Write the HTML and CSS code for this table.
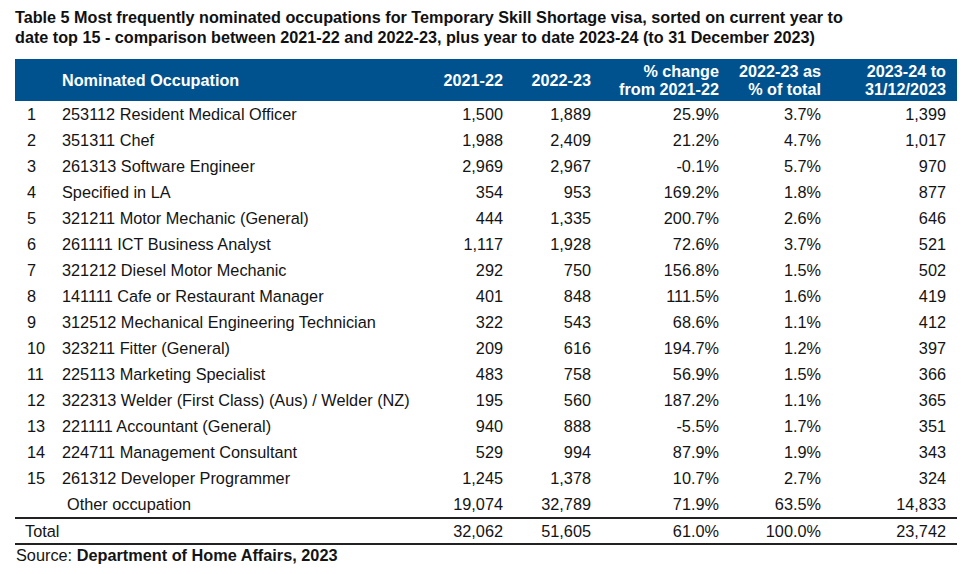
FILE: index.html
```html
<!DOCTYPE html>
<html lang="en">
<head>
<meta charset="utf-8">
<title>Table 5</title>
<link rel="stylesheet" href="styles.css">
</head>
<body>
<div class="page">
  <h1 class="title">Table 5 Most frequently nominated occupations for Temporary Skill Shortage visa, sorted on current year to<br>date top 15 - comparison between 2021-22 and 2022-23, plus year to date 2023-24 (to 31 December 2023)</h1>
  <table class="data">
    <colgroup>
      <col class="c-num"><col class="c-occ"><col class="c-y1"><col class="c-y2"><col class="c-chg"><col class="c-pct"><col class="c-ytd">
    </colgroup>
    <thead>
      <tr>
        <th></th>
        <th class="left">Nominated Occupation</th>
        <th>2021-22</th>
        <th>2022-23</th>
        <th>% change<br>from 2021-22</th>
        <th>2022-23 as<br>% of total</th>
        <th>2023-24 to<br>31/12/2023</th>
      </tr>
    </thead>
    <tbody>
      <tr><td class="rank">1</td><td class="occ">253112 Resident Medical Officer</td><td>1,500</td><td>1,889</td><td>25.9%</td><td>3.7%</td><td>1,399</td></tr>
      <tr><td class="rank">2</td><td class="occ">351311 Chef</td><td>1,988</td><td>2,409</td><td>21.2%</td><td>4.7%</td><td>1,017</td></tr>
      <tr><td class="rank">3</td><td class="occ">261313 Software Engineer</td><td>2,969</td><td>2,967</td><td>-0.1%</td><td>5.7%</td><td>970</td></tr>
      <tr><td class="rank">4</td><td class="occ">Specified in LA</td><td>354</td><td>953</td><td>169.2%</td><td>1.8%</td><td>877</td></tr>
      <tr><td class="rank">5</td><td class="occ">321211 Motor Mechanic (General)</td><td>444</td><td>1,335</td><td>200.7%</td><td>2.6%</td><td>646</td></tr>
      <tr><td class="rank">6</td><td class="occ">261111 ICT Business Analyst</td><td>1,117</td><td>1,928</td><td>72.6%</td><td>3.7%</td><td>521</td></tr>
      <tr><td class="rank">7</td><td class="occ">321212 Diesel Motor Mechanic</td><td>292</td><td>750</td><td>156.8%</td><td>1.5%</td><td>502</td></tr>
      <tr><td class="rank">8</td><td class="occ">141111 Cafe or Restaurant Manager</td><td>401</td><td>848</td><td>111.5%</td><td>1.6%</td><td>419</td></tr>
      <tr><td class="rank">9</td><td class="occ">312512 Mechanical Engineering Technician</td><td>322</td><td>543</td><td>68.6%</td><td>1.1%</td><td>412</td></tr>
      <tr><td class="rank">10</td><td class="occ">323211 Fitter (General)</td><td>209</td><td>616</td><td>194.7%</td><td>1.2%</td><td>397</td></tr>
      <tr><td class="rank">11</td><td class="occ">225113 Marketing Specialist</td><td>483</td><td>758</td><td>56.9%</td><td>1.5%</td><td>366</td></tr>
      <tr><td class="rank">12</td><td class="occ">322313 Welder (First Class) (Aus) / Welder (NZ)</td><td>195</td><td>560</td><td>187.2%</td><td>1.1%</td><td>365</td></tr>
      <tr><td class="rank">13</td><td class="occ">221111 Accountant (General)</td><td>940</td><td>888</td><td>-5.5%</td><td>1.7%</td><td>351</td></tr>
      <tr><td class="rank">14</td><td class="occ">224711 Management Consultant</td><td>529</td><td>994</td><td>87.9%</td><td>1.9%</td><td>343</td></tr>
      <tr><td class="rank">15</td><td class="occ">261312 Developer Programmer</td><td>1,245</td><td>1,378</td><td>10.7%</td><td>2.7%</td><td>324</td></tr>
      <tr><td class="rank"></td><td class="occ other">Other occupation</td><td>19,074</td><td>32,789</td><td>71.9%</td><td>63.5%</td><td>14,833</td></tr>
    </tbody>
    <tfoot>
      <tr><td class="total-label" colspan="2">Total</td><td>32,062</td><td>51,605</td><td>61.0%</td><td>100.0%</td><td>23,742</td></tr>
    </tfoot>
  </table>
  <p class="source">Source: <strong>Department of Home Affairs, 2023</strong></p>
</div>
</body>
</html>
```

FILE: styles.css
```css
html, body {
  margin: 0;
  padding: 0;
  background: #ffffff;
}

body {
  font-family: "Liberation Sans", Arial, sans-serif;
  color: #141414;
}

.page {
  padding: 7px 8px 0 15px;
}

.title {
  margin: 0;
  font-size: 16.2px;
  line-height: 20px;
  font-weight: bold;
  color: #111111;
}

.data {
  margin-top: 12px;
  width: 942px;
  border-collapse: collapse;
  table-layout: fixed;
  font-size: 16.3px;
}

.c-num { width: 47px; }
.c-occ { width: 368px; }
.c-y1 { width: 84px; }
.c-y2 { width: 88px; }
.c-chg { width: 128px; }
.c-pct { width: 102px; }
.c-ytd { width: 125px; }

.data thead th {
  background: #00528e;
  color: #ffffff;
  font-size: 16.2px;
  font-weight: bold;
  height: 42px;
  padding: 0 11px 0 0;
  line-height: 18px;
  text-align: right;
  vertical-align: middle;
}

.data thead th.left {
  text-align: left;
  padding: 0;
}

.data td {
  height: 26px;
  padding: 0 11px 0 0;
  line-height: 18px;
  text-align: right;
  vertical-align: middle;
  white-space: nowrap;
}

.data td.rank {
  text-align: left;
  padding-left: 12px;
  padding-right: 0;
}

.data td.occ {
  text-align: left;
  padding: 0;
}

.data td.other {
  padding-left: 5px;
}

.data tfoot td {
  border-top: 2px solid #222222;
  border-bottom: 2px solid #222222;
  height: 24px;
}

.data tfoot td.total-label {
  text-align: left;
  padding-left: 10px;
}

.source {
  margin: 1px 0 0 1px;
  font-size: 16.3px;
  line-height: 18px;
  color: #141414;
}

.source strong {
  font-weight: bold;
}
```
